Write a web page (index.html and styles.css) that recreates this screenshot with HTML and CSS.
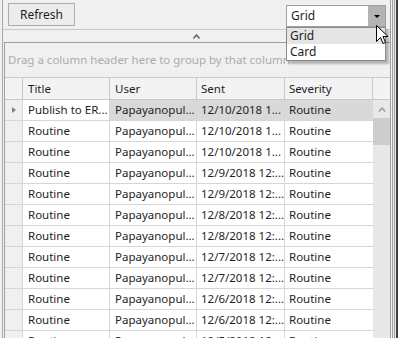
FILE: index.html
```html
<!DOCTYPE html>
<html lang="en">
<head>
  <meta charset="UTF-8" />
  <title>Messages</title>
  <link rel="stylesheet" href="styles.css">
</head>
<body>
  <div class="window">
    <div class="panel">
      <div class="toolbar">
        <button class="btn">Refresh</button>
        <div class="combo">
          <span class="combo-text">Grid</span>
          <span class="combo-btn"><span class="caret"></span></span>
          <ul class="combo-list">
            <li class="active">Grid</li>
            <li>Card</li>
          </ul>
        </div>
      </div>

      <div class="collapse">
        <svg width="7" height="5" viewBox="0 0 7 5"><path d="M0.5 4.5 L3.5 1 L6.5 4.5" fill="none" stroke="#6a6a6a" stroke-width="1.6"/></svg>
      </div>

      <div class="grid">
        <div class="group-panel">Drag a column header here to group by that column</div>

        <div class="grid-head">
          <div class="cell ind"></div>
          <div class="cell c-title">Title</div>
          <div class="cell c-user">User</div>
          <div class="cell c-sent">Sent</div>
          <div class="cell c-sev">Severity</div>
          <div class="cell c-end"></div>
        </div>

        <div class="grid-body">
          <div class="rows">
            <div class="row selected">
              <div class="cell ind"><span class="tri"></span></div>
              <div class="cell c-title focus">Publish to ER...</div>
              <div class="cell c-user">Papayanopul...</div>
              <div class="cell c-sent">12/10/2018 1...</div>
              <div class="cell c-sev">Routine</div>
            </div>
            <div class="row">
              <div class="cell ind"></div>
              <div class="cell c-title">Routine</div>
              <div class="cell c-user">Papayanopul...</div>
              <div class="cell c-sent">12/10/2018 1...</div>
              <div class="cell c-sev">Routine</div>
            </div>
            <div class="row">
              <div class="cell ind"></div>
              <div class="cell c-title">Routine</div>
              <div class="cell c-user">Papayanopul...</div>
              <div class="cell c-sent">12/10/2018 1...</div>
              <div class="cell c-sev">Routine</div>
            </div>
            <div class="row">
              <div class="cell ind"></div>
              <div class="cell c-title">Routine</div>
              <div class="cell c-user">Papayanopul...</div>
              <div class="cell c-sent">12/9/2018 12:...</div>
              <div class="cell c-sev">Routine</div>
            </div>
            <div class="row">
              <div class="cell ind"></div>
              <div class="cell c-title">Routine</div>
              <div class="cell c-user">Papayanopul...</div>
              <div class="cell c-sent">12/9/2018 12:...</div>
              <div class="cell c-sev">Routine</div>
            </div>
            <div class="row">
              <div class="cell ind"></div>
              <div class="cell c-title">Routine</div>
              <div class="cell c-user">Papayanopul...</div>
              <div class="cell c-sent">12/8/2018 12:...</div>
              <div class="cell c-sev">Routine</div>
            </div>
            <div class="row">
              <div class="cell ind"></div>
              <div class="cell c-title">Routine</div>
              <div class="cell c-user">Papayanopul...</div>
              <div class="cell c-sent">12/8/2018 12:...</div>
              <div class="cell c-sev">Routine</div>
            </div>
            <div class="row">
              <div class="cell ind"></div>
              <div class="cell c-title">Routine</div>
              <div class="cell c-user">Papayanopul...</div>
              <div class="cell c-sent">12/7/2018 12:...</div>
              <div class="cell c-sev">Routine</div>
            </div>
            <div class="row">
              <div class="cell ind"></div>
              <div class="cell c-title">Routine</div>
              <div class="cell c-user">Papayanopul...</div>
              <div class="cell c-sent">12/7/2018 12:...</div>
              <div class="cell c-sev">Routine</div>
            </div>
            <div class="row">
              <div class="cell ind"></div>
              <div class="cell c-title">Routine</div>
              <div class="cell c-user">Papayanopul...</div>
              <div class="cell c-sent">12/6/2018 12:...</div>
              <div class="cell c-sev">Routine</div>
            </div>
            <div class="row">
              <div class="cell ind"></div>
              <div class="cell c-title">Routine</div>
              <div class="cell c-user">Papayanopul...</div>
              <div class="cell c-sent">12/6/2018 12:...</div>
              <div class="cell c-sev">Routine</div>
            </div>
            <div class="row">
              <div class="cell ind"></div>
              <div class="cell c-title">Routine</div>
              <div class="cell c-user">Papayanopul...</div>
              <div class="cell c-sent">12/5/2018 12:...</div>
              <div class="cell c-sev">Routine</div>
            </div>
          </div>

          <div class="scrollbar">
            <div class="sb-up">
              <svg width="8" height="5" viewBox="0 0 8 5"><path d="M0.8 4.5 L4 1.2 L7.2 4.5" fill="none" stroke="#a0a0a0" stroke-width="1.6"/></svg>
            </div>
            <div class="sb-thumb"></div>
          </div>
        </div>
      </div>
    </div>
    <div class="edge"></div>
  </div>

  <svg class="cursor" width="13" height="20" viewBox="0 0 13 20">
    <path d="M0.5 0.5 L0.5 16.5 L4.5 12.5 L7 18.5 L9.5 17.5 L7 11.5 L12 11.5 Z" fill="#fff" stroke="#000" stroke-width="1"/>
  </svg>
</body>
</html>
```

FILE: styles.css
```css
body {
  margin: 0;
  width: 398px;
  height: 338px;
  overflow: hidden;
  background: #f0f0f0;
  font-family: "Noto Sans", "Open Sans", sans-serif;
  font-size: 11.5px;
  color: #1e1e1e;
}

.window {
  display: flex;
  height: 338px;
}

.panel {
  flex: 1;
  margin-left: 2px;
  border-left: 1px solid #a8a8a8;
  display: flex;
  flex-direction: column;
  min-width: 0;
}

.edge {
  width: 8px;
  background: linear-gradient(to right,
    #a0a0a0 0, #a0a0a0 1px,
    #f4f4f4 1px, #f4f4f4 2px,
    #a0a0a0 2px, #a0a0a0 3px,
    #ececec 3px, #ececec 4px,
    #a0a0a0 4px, #a0a0a0 5px,
    #e8e8e8 5px, #e8e8e8 6px,
    #404040 6px, #404040 8px);
}

/* toolbar */
.toolbar {
  height: 30px;
  box-sizing: border-box;
  border-bottom: 1px solid #c8c8c8;
  display: flex;
  align-items: flex-start;
  padding: 3px 4px 0 5px;
}

.btn {
  width: 67px;
  height: 23px;
  border: 1px solid #adadad;
  background: #ececec;
  font-family: inherit;
  font-size: 12px;
  color: #1e1e1e;
  padding: 0;
}

.combo {
  margin-left: auto;
  margin-top: 2px;
  width: 100px;
  height: 22px;
  box-sizing: border-box;
  border: 1px solid #a0a0a0;
  background: #fff;
  display: flex;
  position: relative;
  font-size: 12px;
}

.combo-text {
  flex: 1;
  padding-left: 4px;
  line-height: 20px;
}

.combo-btn {
  width: 17px;
  background: #b4b4b4;
  display: flex;
  align-items: center;
  justify-content: center;
}

.caret {
  width: 0;
  height: 0;
  border-left: 3px solid transparent;
  border-right: 3px solid transparent;
  border-top: 3px solid #000;
}

.combo-list {
  position: absolute;
  left: -1px;
  top: 21px;
  width: 100px;
  margin: 0;
  padding: 0;
  list-style: none;
  background: #fff;
  border: 1px solid #8a8a8a;
  box-sizing: border-box;
  box-shadow: 3px 3px 2px rgba(0,0,0,0.25);
}

.combo-list li {
  height: 16px;
  line-height: 16px;
  padding-left: 3px;
}

.combo-list li.active {
  background: #e5e5e5;
}

.collapse {
  height: 12px;
  display: flex;
  justify-content: center;
  align-items: center;
}

/* grid */
.grid {
  flex: 1;
  margin-left: 1px;
  border-top: 1px solid #a0a0a0;
  border-left: 1px solid #a0a0a0;
  display: flex;
  flex-direction: column;
  min-height: 0;
}

.group-panel {
  height: 35px;
  box-sizing: border-box;
  border-bottom: 1px solid #c8c8c8;
  padding-left: 3px;
  line-height: 34px;
  color: #acacac;
  white-space: nowrap;
  overflow: hidden;
}

.grid-head,
.row {
  display: flex;
}

.grid-head {
  height: 22px;
}

.cell {
  box-sizing: border-box;
  border-right: 1px solid #d6d6d6;
  border-bottom: 1px solid #d6d6d6;
  padding-left: 5px;
  white-space: nowrap;
  overflow: hidden;
  line-height: 20px;
}

.grid-head .cell {
  background: #f3f3f3;
  line-height: 21px;
  border-color: #c8c8c8;
}

.row .cell {
  height: 21px;
  background: #fff;
}

.row .cell.ind {
  background: #f0f0f0;
}

.row.selected .cell {
  background: #d9d9d9;
}

.row.selected .cell.focus {
  background: #fff;
}

.row.selected .cell.ind {
  background: #f0f0f0;
}

.ind { width: 18px; padding: 0; display: flex; align-items: center; justify-content: center; }
.c-title { width: 87px; }
.c-user { width: 87px; }
.c-sent { width: 88px; padding-left: 4px; }
.c-sev { width: 88px; border-right: none; padding-left: 4px; }
.grid-head .c-sev { border-right: 1px solid #c8c8c8; }
.c-end { flex: 1; padding: 0; border-right: none; }

.tri {
  width: 0;
  height: 0;
  border-top: 3px solid transparent;
  border-bottom: 3px solid transparent;
  border-left: 4px solid #808080;
  margin-left: 1px;
}

.grid-body {
  flex: 1;
  display: flex;
  min-height: 0;
  overflow: hidden;
}

.rows {
  width: 368px;
}

.scrollbar {
  flex: 1;
  background: #e8e8e8;
  display: flex;
  flex-direction: column;
}

.sb-up {
  height: 18px;
  display: flex;
  align-items: center;
  justify-content: center;
}

.sb-thumb {
  height: 27px;
  background: #cdcdcd;
}

.cursor {
  position: absolute;
  left: 376px;
  top: 25px;
}
```
